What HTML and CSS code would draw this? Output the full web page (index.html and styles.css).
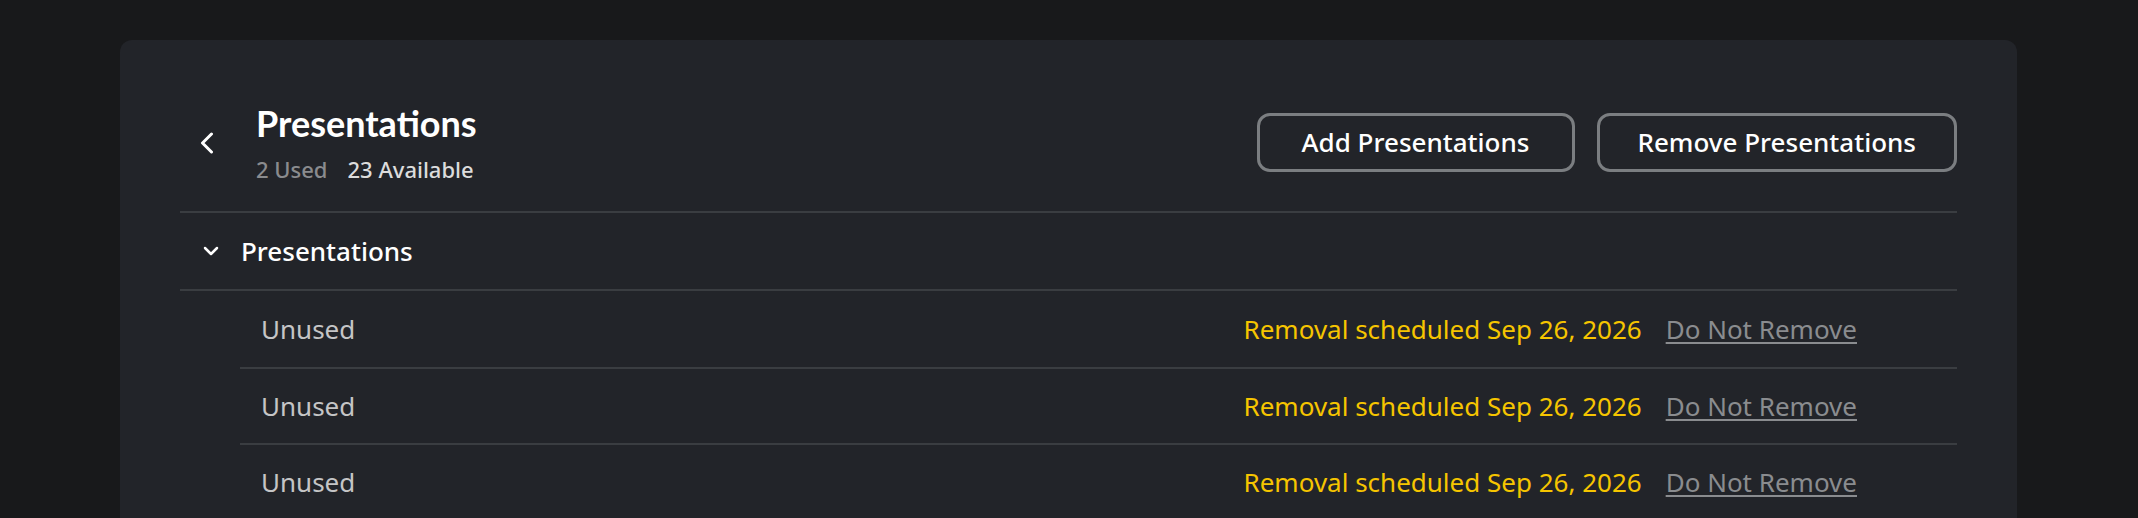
FILE: index.html
```html
<!DOCTYPE html>
<html lang="en">
<head>
<meta charset="utf-8">
<title>Presentations</title>
<link rel="stylesheet" href="styles.css">
</head>
<body>
<main class="card">
  <header class="header">
    <div class="header-left">
      <button class="back" aria-label="Back">
        <svg width="14" height="22" viewBox="0 0 14 22"><polyline points="11.5,2 2.5,11 11.5,20" fill="none" stroke="#ffffff" stroke-width="3" stroke-linecap="round" stroke-linejoin="round"/></svg>
      </button>
      <div class="title-block">
        <h1 class="title">Presentations</h1>
        <div class="stats"><span class="used">2 Used</span><span class="available">23 Available</span></div>
      </div>
    </div>
    <div class="actions">
      <button class="btn">Add Presentations</button>
      <button class="btn">Remove Presentations</button>
    </div>
  </header>
  <section class="section">
    <div class="section-head">
      <svg class="caret" width="16" height="10" viewBox="0 0 16 10"><polyline points="2,2 8,8 14,2" fill="none" stroke="#ffffff" stroke-width="2.5" stroke-linecap="round" stroke-linejoin="round"/></svg>
      <span class="section-title">Presentations</span>
    </div>
    <ul class="rows">
      <li class="row"><span class="row-name">Unused</span><span class="row-right"><span class="status">Removal scheduled Sep 26, 2026</span><a class="link" href="#">Do Not Remove</a></span></li>
      <li class="row"><span class="row-name">Unused</span><span class="row-right"><span class="status">Removal scheduled Sep 26, 2026</span><a class="link" href="#">Do Not Remove</a></span></li>
      <li class="row"><span class="row-name">Unused</span><span class="row-right"><span class="status">Removal scheduled Sep 26, 2026</span><a class="link" href="#">Do Not Remove</a></span></li>
    </ul>
  </section>
</main>
</body>
</html>
```

FILE: styles.css
```css
* { box-sizing: border-box; }
html, body { margin: 0; padding: 0; }
body {
  background: #18191b;
  font-family: "Noto Sans", "Open Sans", sans-serif;
  color: #ffffff;
  overflow: hidden;
}
.card {
  margin: 40px 121px 0 120px;
  background: #222429;
  border-radius: 12px;
  padding: 0 60px 40px;
  min-height: 520px;
}
.header {
  display: flex;
  align-items: center;
  justify-content: space-between;
  padding: 62px 0 28px 20px;
  border-bottom: 2px solid #3a3d41;
}
.header-left {
  display: flex;
  align-items: center;
}
.back {
  background: none;
  border: 0;
  padding: 0;
  margin: 0 42px 0 0;
  width: 14px;
  height: 22px;
  display: flex;
  cursor: pointer;
}
.title-block { display: flex; flex-direction: column; }
.title {
  margin: 0;
  font-family: "Lato", "Noto Sans", sans-serif;
  font-weight: 700;
  font-size: 36px;
  line-height: 42px;
  color: #ffffff;
}
.stats {
  margin-top: 11px;
  font-size: 22px;
  line-height: 28px;
  font-weight: 500;
  display: flex;
  gap: 20px;
}
.used { color: #8a8b8e; }
.available { color: #dcdcdc; }
.actions { display: flex; gap: 22px; }
.btn {
  height: 59px;
  min-width: 318px;
  padding: 0 38px;
  border: 3px solid #7b7e81;
  border-radius: 13px;
  background: transparent;
  color: #ffffff;
  font-family: "Noto Sans", "Open Sans", sans-serif;
  font-size: 26px;
  font-weight: 500;
  line-height: 35px;
  display: flex;
  align-items: center;
  justify-content: center;
  cursor: pointer;
}
.section-head {
  display: flex;
  align-items: center;
  height: 78px;
  padding-left: 23px;
  border-bottom: 2px solid #3a3d41;
}
.caret { margin-right: 22px; }
.section-title {
  font-size: 26px;
  font-weight: 500;
  line-height: 35px;
  color: #ffffff;
}
.rows {
  list-style: none;
  margin: 0 0 0 60px;
  padding: 0;
}
.row {
  display: flex;
  align-items: center;
  justify-content: space-between;
  height: 76px;
  padding: 0 100px 0 21px;
  border-bottom: 2px solid #3a3d41;
  font-size: 26px;
  line-height: 35px;
}
.row:first-child { height: 78px; }
.row-name { color: #c5c5c6; }
.row-right { display: flex; gap: 24px; }
.status { color: #f6c500; }
.link {
  color: #8a8c8f;
  text-decoration: underline;
  text-decoration-thickness: 2px;
  text-underline-offset: 3px;
}
```
